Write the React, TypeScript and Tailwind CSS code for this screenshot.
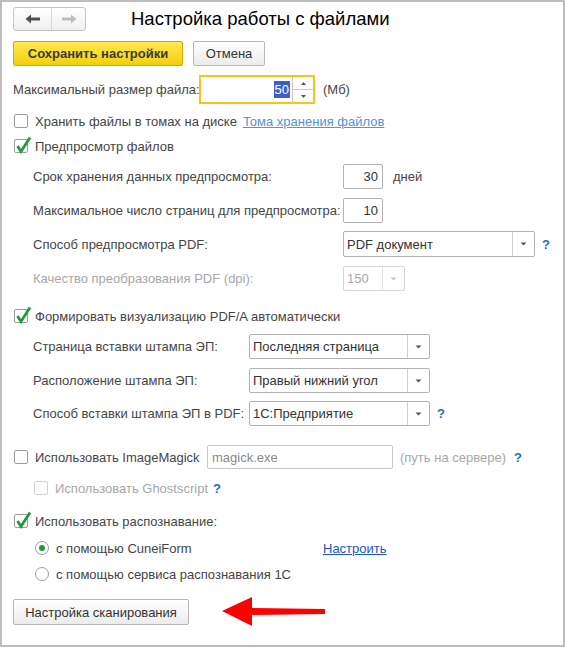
import React from "react";

const font = { fontFamily: '"Liberation Sans", Arial, sans-serif' };

function Check({ checked, disabled }: { checked?: boolean; disabled?: boolean }) {
  return (
    <span
      className={`relative shrink-0 w-[14px] h-[14px] rounded-[2px] border bg-white ${
        disabled ? "border-[#d2d2d2]" : "border-[#9c9c9c]"
      }`}
    >
      {checked && (
        <svg className="absolute left-[-1px] top-[-4px]" width="18" height="18" viewBox="0 0 18 18">
          <path d="M3.5 10 L7 15.5 L16 1.5" fill="none" stroke="#1f9a3c" strokeWidth="2.8" strokeLinejoin="miter" />
        </svg>
      )}
    </span>
  );
}

function Radio({ checked }: { checked?: boolean }) {
  return (
    <span className="shrink-0 w-[14px] h-[14px] rounded-full border border-[#9c9c9c] bg-white flex items-center justify-center">
      {checked && <span className="w-[6px] h-[6px] rounded-full bg-[#1f9a3c]" />}
    </span>
  );
}

function Caret({ disabled }: { disabled?: boolean }) {
  return (
    <svg width="7" height="4" viewBox="0 0 7 4">
      <path d="M0.5 0.5 L6.5 0.5 L3.5 3.5 Z" fill={disabled ? "#c4c4c4" : "#555"} />
    </svg>
  );
}

function Select({ w, value, disabled }: { w: string; value: string; disabled?: boolean }) {
  return (
    <div
      className={`flex h-full ${w} rounded-[2px] border bg-white ${
        disabled ? "border-[#d6d6d6] text-[#a8a8a8]" : "border-[#b3b3b3] text-[#333]"
      }`}
    >
      <span className="flex-1 flex items-center pl-[3px] whitespace-nowrap overflow-hidden">{value}</span>
      <span
        className={`w-[22px] flex items-center justify-center border-l ${
          disabled ? "border-[#e0e0e0]" : "border-[#d0d0d0]"
        }`}
      >
        <Caret disabled={disabled} />
      </span>
    </div>
  );
}

function NumInput({ value }: { value: string }) {
  return (
    <div className="h-full w-[40px] rounded-[2px] border border-[#b3b3b3] bg-white flex items-center justify-end pr-[4px] text-[#333]">
      {value}
    </div>
  );
}

function Help() {
  return <span className="text-[#1a6fc4] font-bold text-[13px]">?</span>;
}

export default function App() {
  return (
    <div
      className="w-[565px] h-[647px] border-2 border-[#bdbdbd] bg-white text-[13px] text-[#454545] leading-none pl-[11px] pt-[5px] flex flex-col"
      style={font}
    >
      {/* header */}
      <div className="flex items-center h-[24px]">
        <div className="flex h-[24px] w-[73px] rounded-[3px] border border-[#c4c4c4] bg-gradient-to-b from-white to-[#f0f0f0]">
          <span className="w-[38px] flex items-center justify-center border-r border-[#d6d6d6]">
            <svg width="16" height="10" viewBox="0 0 16 10">
              <path d="M0.5 5 L6 0.5 L6 3.5 L15 3.5 L15 6.5 L6 6.5 L6 9.5 Z" fill="#505050" />
            </svg>
          </span>
          <span className="flex-1 flex items-center justify-center">
            <svg width="16" height="10" viewBox="0 0 16 10">
              <path d="M15.5 5 L10 0.5 L10 3.5 L1 3.5 L1 6.5 L10 6.5 L10 9.5 Z" fill="#bdbdbd" />
            </svg>
          </span>
        </div>
        <span className="ml-[45px] text-[18.5px] text-black whitespace-nowrap">Настройка работы с файлами</span>
      </div>

      {/* buttons */}
      <div className="flex items-center h-[25px] mt-[10px]">
        <div className="h-full w-[170px] rounded-[2px] border border-[#d2aa00] bg-gradient-to-b from-[#ffe94a] to-[#f4cf00] flex items-center justify-center font-bold text-[#3a3a3a]">
          Сохранить настройки
        </div>
        <div className="ml-[10px] h-full w-[72px] rounded-[2px] border border-[#b8b8b8] bg-gradient-to-b from-white to-[#ececec] flex items-center justify-center text-[#333]">
          Отмена
        </div>
      </div>

      {/* max size */}
      <div className="flex items-center h-[29px] mt-[9px]">
        <span className="w-[186px] whitespace-nowrap">Максимальный размер файла:</span>
        <div className="h-full w-[116px] border-2 border-[#f5c518] bg-white flex">
          <span className="flex-1 flex items-center justify-end pr-[2px]">
            <span className="bg-[#3d5fc4] text-white px-[1px] py-[2px]">50</span>
          </span>
          <span className="w-[21px] border-l border-[#c8c8c8] flex flex-col">
            <span className="flex-1 flex items-center justify-center border-b border-[#c8c8c8]">
              <svg width="5" height="3" viewBox="0 0 5 3"><path d="M0 3 L2.5 0 L5 3 Z" fill="#555" /></svg>
            </span>
            <span className="flex-1 flex items-center justify-center">
              <svg width="5" height="3" viewBox="0 0 5 3"><path d="M0 0 L2.5 3 L5 0 Z" fill="#555" /></svg>
            </span>
          </span>
        </div>
        <span className="ml-[8px]">(Мб)</span>
      </div>

      {/* store in volumes */}
      <div className="flex items-center h-[20px] mt-[7px] pl-[1px]">
        <Check />
        <span className="ml-[7px] whitespace-nowrap">Хранить файлы в томах на диске</span>
        <span className="ml-[6px] text-[#5b8fd6] underline whitespace-nowrap">Тома хранения файлов</span>
      </div>

      {/* preview */}
      <div className="flex items-center h-[20px] mt-[5px] pl-[1px]">
        <Check checked />
        <span className="ml-[7px]">Предпросмотр файлов</span>
      </div>

      <div className="flex items-center h-[25px] mt-[8px] pl-[20px]">
        <span className="w-[310px] whitespace-nowrap">Срок хранения данных предпросмотра:</span>
        <NumInput value="30" />
        <span className="ml-[10px]">дней</span>
      </div>

      <div className="flex items-center h-[25px] mt-[9px] pl-[20px]">
        <span className="w-[310px] whitespace-nowrap">Максимальное число страниц для предпросмотра:</span>
        <NumInput value="10" />
      </div>

      <div className="flex items-center h-[26px] mt-[8px] pl-[20px]">
        <span className="w-[310px] whitespace-nowrap">Способ предпросмотра PDF:</span>
        <Select w="w-[192px]" value="PDF документ" />
        <span className="ml-[7px]">
          <Help />
        </span>
      </div>

      <div className="flex items-center h-[25px] mt-[9px] pl-[20px]">
        <span className="w-[310px] whitespace-nowrap text-[#a8a8a8]">Качество преобразования PDF (dpi):</span>
        <Select w="w-[62px]" value="150" disabled />
      </div>

      {/* PDF/A */}
      <div className="flex items-center h-[20px] mt-[15px] pl-[1px]">
        <Check checked />
        <span className="ml-[7px] whitespace-nowrap">Формировать визуализацию PDF/A автоматически</span>
      </div>

      <div className="flex items-center h-[25px] mt-[8px] pl-[20px]">
        <span className="w-[216px] whitespace-nowrap">Страница вставки штампа ЭП:</span>
        <Select w="w-[181px]" value="Последняя страница" />
      </div>

      <div className="flex items-center h-[25px] mt-[9px] pl-[20px]">
        <span className="w-[216px] whitespace-nowrap">Расположение штампа ЭП:</span>
        <Select w="w-[181px]" value="Правый нижний угол" />
      </div>

      <div className="flex items-center h-[25px] mt-[8px] pl-[20px]">
        <span className="w-[216px] whitespace-nowrap">Способ вставки штампа ЭП в PDF:</span>
        <Select w="w-[181px]" value="1С:Предприятие" />
        <span className="ml-[7px]">
          <Help />
        </span>
      </div>

      {/* ImageMagick */}
      <div className="flex items-center h-[24px] mt-[19px] pl-[1px]">
        <Check />
        <span className="ml-[7px] w-[172px] whitespace-nowrap">Использовать ImageMagick</span>
        <div className="h-full w-[186px] rounded-[2px] border border-[#c8c8c8] bg-white flex items-center pl-[4px] text-[#8a8a8a]">
          magick.exe
        </div>
        <span className="ml-[7px] text-[#a8a8a8] whitespace-nowrap">(путь на сервере)</span>
        <span className="ml-[8px]">
          <Help />
        </span>
      </div>

      <div className="flex items-center h-[20px] mt-[9px] pl-[21px]">
        <Check disabled />
        <span className="ml-[7px] text-[#a8a8a8] whitespace-nowrap">Использовать Ghostscript</span>
        <span className="ml-[5px]">
          <Help />
        </span>
      </div>

      {/* recognition */}
      <div className="flex items-center h-[20px] mt-[13px] pl-[1px]">
        <Check checked />
        <span className="ml-[7px] whitespace-nowrap">Использовать распознавание:</span>
      </div>

      <div className="flex items-center h-[20px] mt-[7px] pl-[22px]">
        <Radio checked />
        <span className="ml-[7px] w-[267px] whitespace-nowrap">с помощью CuneiForm</span>
        <span className="text-[#1f55b8] underline">Настроить</span>
      </div>

      <div className="flex items-center h-[20px] mt-[6px] pl-[22px]">
        <Radio />
        <span className="ml-[7px] whitespace-nowrap">с помощью сервиса распознавания 1С</span>
      </div>

      <div className="flex items-center h-[26px] mt-[15px]">
        <div className="h-full w-[176px] rounded-[2px] border border-[#b8b8b8] bg-gradient-to-b from-white to-[#ececec] flex items-center justify-center text-[#333] whitespace-nowrap">
          Настройка сканирования
        </div>
        <svg className="ml-[32px]" width="106" height="32" viewBox="0 0 106 32">
          <path d="M1 15 L31 1 L31 12 L104 13 L104 18 L31 19 L31 30 Z" fill="#ff0000" />
        </svg>
      </div>
    </div>
  );
}
